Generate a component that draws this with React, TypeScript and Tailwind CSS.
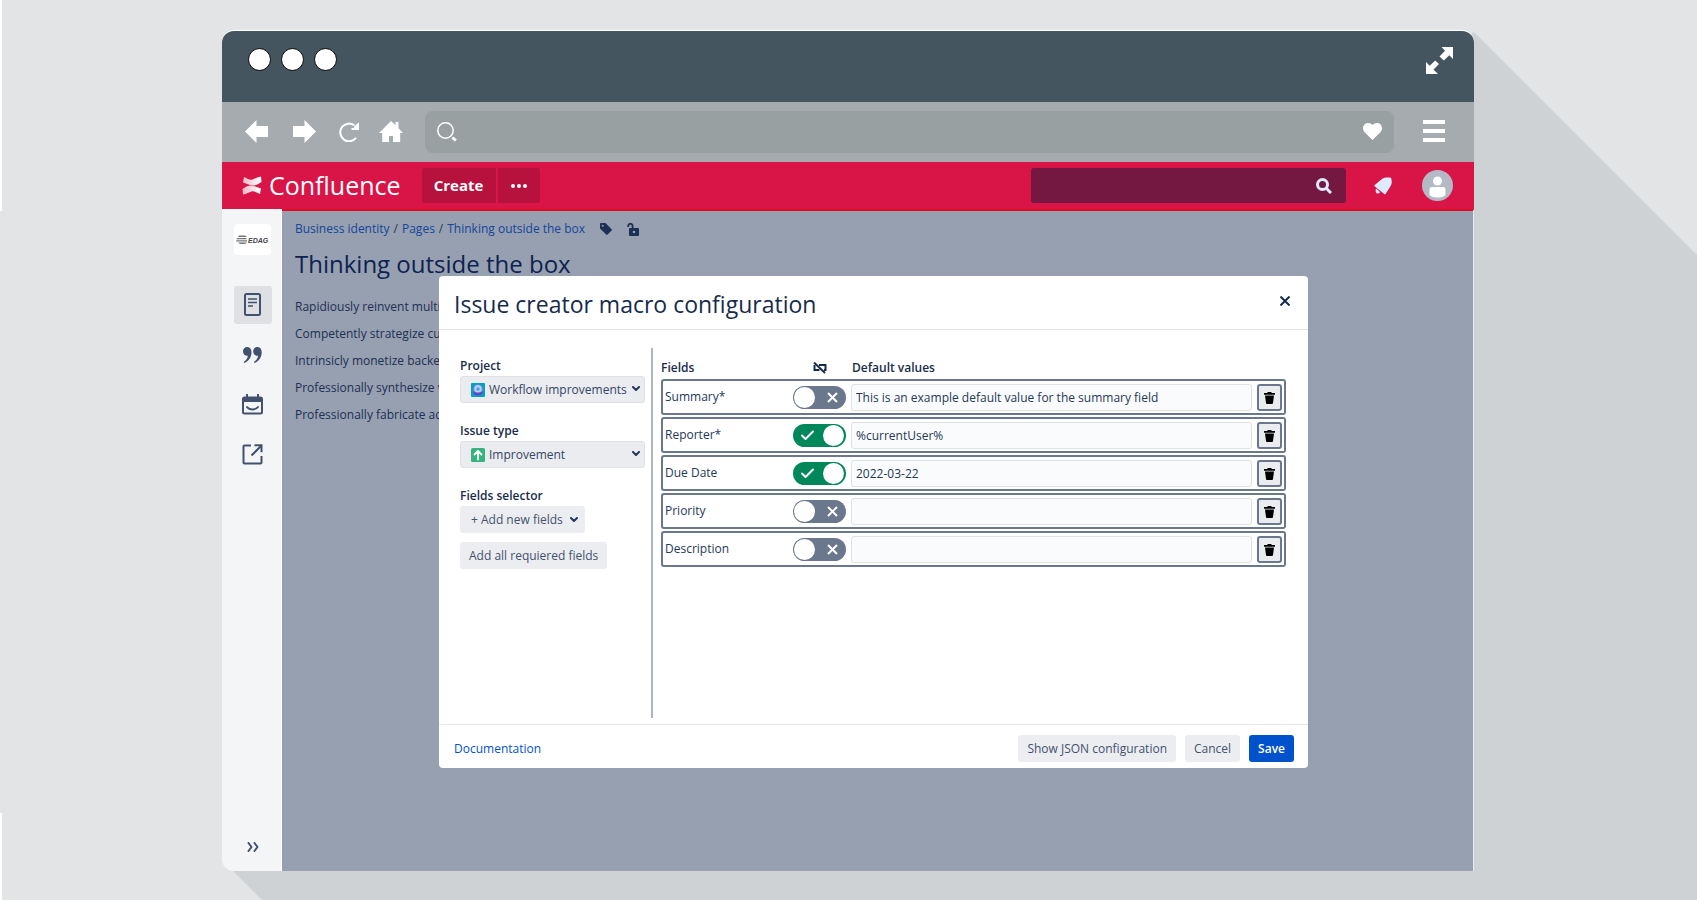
import { useState } from "react";
import type { ReactNode } from "react";

type Field = {
  name: string;
  hidden: boolean;
  value: string;
};

const initialFields: Field[] = [
  { name: "Summary*", hidden: false, value: "This is an example default value for the summary field" },
  { name: "Reporter*", hidden: true, value: "%currentUser%" },
  { name: "Due Date", hidden: true, value: "2022-03-22" },
  { name: "Priority", hidden: false, value: "" },
  { name: "Description", hidden: false, value: "" },
];

const paragraphs = [
  "Rapidiously reinvent multif",
  "Competently strategize cus",
  "Intrinsicly monetize backen",
  "Professionally synthesize w",
  "Professionally fabricate ada",
];

function Chevron({ className }: { className?: string }) {
  return (
    <svg className={className} width="8" height="6" viewBox="0 0 8 6" fill="none" stroke="#253858" strokeWidth="2">
      <path d="M1 1l3 3 3-3" strokeLinecap="round" strokeLinejoin="round" />
    </svg>
  );
}

function TitleBar() {
  return (
    <div className="flex h-[71px] items-start justify-between rounded-t-xl bg-[#45555f] pl-[26px] pr-[21px]">
      <div className="mt-[17px] flex gap-2.5">
        <span className="size-[23px] rounded-full border border-black bg-white" />
        <span className="size-[23px] rounded-full border border-black bg-white" />
        <span className="size-[23px] rounded-full border border-black bg-white" />
      </div>
      <button aria-label="Full screen" className="mt-4">
        <svg width="27" height="27" viewBox="0 0 27 27" fill="#fff">
          <path d="M15.500 0H27v12l-3.700-3.700-5.500 5.200-4.300-4 5.500-5.700z" />
          <path d="M0 27V15l3.700 3.700 5.500-5.200 3.800 3.500-5.500 5.500L12 27z" />
        </svg>
      </button>
    </div>
  );
}

function BrowserToolbar() {
  return (
    <div className="flex h-[60px] items-center bg-[#a5abaf] pb-px pl-[23px] pr-[29px]">
      <button aria-label="Back">
        <svg width="23" height="23" viewBox="0 0 23 23" fill="#fff">
          <path d="M0 11.500L11.500 0v6H23v11H11.500v6z" />
        </svg>
      </button>
      <button aria-label="Forward" className="ml-[25px]">
        <svg width="23" height="23" viewBox="0 0 23 23" fill="#fff">
          <path d="M23 11.500L11.500 0v6H0v11h11.500v6z" />
        </svg>
      </button>
      <button aria-label="Reload" className="ml-[23px]">
        <svg width="20" height="20" viewBox="0 0 20 20">
          <path d="M17 15.800A8.800 8.800 0 1 1 15.500 3.500" fill="none" stroke="#fff" strokeWidth="2" />
          <path d="M20 .3V8h-7.500V6h2.300l1-2.300z" fill="#fff" />
        </svg>
      </button>
      <button aria-label="Home" className="ml-5">
        <svg width="24" height="21" viewBox="0 0 24 21" fill="#fff">
          <path d="M12 0l4.500 4.300V1h3v6.200L24 12h-2.800v9H14v-6h-4v6H3.200v-9H0z" />
        </svg>
      </button>
      <div className="ml-[22px] flex h-[42px] flex-1 items-center rounded-lg bg-[#99a0a2] pl-3 pr-3">
        <svg width="20" height="20" viewBox="0 0 20 20" fill="none" stroke="#fff">
          <circle cx="8.500" cy="8.500" r="7.700" strokeWidth="1.500" />
          <path d="M15.500 15.500l3.300 3" strokeWidth="3" />
        </svg>
        <input aria-label="Address" className="h-full min-w-0 flex-1 px-3 text-[13px] text-white outline-none" />
        <svg width="19" height="17" viewBox="0 0 19 17" fill="#fff">
          <path d="M9.500 17L1.600 9.300C-.6 7-.5 3.500 1.500 1.500c2.300-2.200 6-1.900 8 .6 2-2.500 5.700-2.800 8-.6 2 2 2.100 5.500-.1 7.800z" />
        </svg>
      </div>
      <button aria-label="Menu" className="mb-0.5 ml-[29px] flex flex-col gap-[5px]">
        <span className="h-1 w-[22px] bg-white" />
        <span className="h-1 w-[22px] bg-white" />
        <span className="h-1 w-[22px] bg-white" />
      </button>
    </div>
  );
}

function ConfluenceHeader() {
  return (
    <header className="flex h-[47px] items-center bg-[#d91547] pl-5 pr-[21px]">
      <a href="#" className="flex items-center gap-[7px] pb-px text-white">
        <svg width="20" height="19" viewBox="0 0 20 19">
          <defs>
            <linearGradient id="cf" x1="0" x2="1">
              <stop offset="0" stopColor="#fff" stopOpacity=".7" />
              <stop offset="1" stopColor="#fff" />
            </linearGradient>
          </defs>
          <path d="M2 1c3.500 1.800 6 3.300 8.500 2.500C13 2.800 15.500 1 19 .5L19.500 6c-3 2-6.500 4-10 3.300C6.500 8.700 4 7.500 1 6.500z" fill="url(#cf)" />
          <path d="M18 18c-3.500-1.800-6-3.300-8.500-2.500-2.500.7-5 2.500-8.500 3L.5 13c3-2 6.500-4 10-3.300 3 .6 5.500 1.800 8.500 2.800z" fill="url(#cf)" />
        </svg>
        <span className="text-[25px] leading-8">Confluence</span>
      </a>
      <button className="ml-[21px] h-[35px] w-[74px] rounded-l-[3px] bg-[#b7123d] text-[15px] font-bold text-white">Create</button>
      <button aria-label="More" className="ml-0.5 flex h-[35px] w-[42px] items-center justify-center gap-0.5 rounded-r-[3px] bg-[#b7123d]">
        <span className="size-1 rounded-full bg-white" />
        <span className="size-1 rounded-full bg-white" />
        <span className="size-1 rounded-full bg-white" />
      </button>
      <label className="ml-auto flex h-[35px] w-[315px] items-center rounded-[3px] bg-[#741841] pr-3.5">
        <input aria-label="Search" className="h-full min-w-0 flex-1 px-3 text-[13px] text-white outline-none" />
        <svg width="16" height="16" viewBox="0 0 16 16" fill="none" stroke="#deebff" strokeWidth="3">
          <circle cx="6.500" cy="6.500" r="5" />
          <path d="M10.500 10.500l4.500 4.500" />
        </svg>
      </label>
      <button aria-label="Notifications" className="ml-7">
        <svg width="18" height="18" viewBox="0 0 18 18" fill="#deebff">
          <path d="M8 2C11 0 14 .2 17 .8c1.200 3.500 1 6.500-1 9.200l-4.500 7c-.3.500-.8.500-1.200.1L.6 9.300c-.5-.4-.4-1 .1-1.300z" />
          <path d="M2.200 11.500l4 3.800c-1 1.200-2.800 1.500-3.800.6s-1-3.400-.2-4.400z" />
        </svg>
      </button>
      <button aria-label="Profile" className="ml-[30px]">
        <svg width="31" height="31" viewBox="0 0 31 31">
          <circle cx="15.500" cy="15.500" r="15.500" fill="#b3bac5" />
          <circle cx="15.500" cy="11" r="4.500" fill="#fff" />
          <path d="M7.500 19.500a2.500 2.500 0 0 1 2.500-2.500h11a2.500 2.500 0 0 1 2.500 2.500V24c0 2-3.500 3.500-8 3.500s-8-1.500-8-3.500z" fill="#fff" />
        </svg>
      </button>
    </header>
  );
}

function Sidebar() {
  return (
    <nav className="flex w-[60px] shrink-0 flex-col items-center rounded-bl-xl border-r border-white bg-[#f4f5f7] pb-[19px] pl-0.5 pt-[15px]">
      <a href="#" aria-label="EDAG" className="flex h-[31px] w-[37px] items-center justify-center rounded-sm bg-white">
        <svg width="34" height="10" viewBox="0 0 34 10">
          <path d="M3 .5h6l2 1.500H2zM1 3h9.500v1.300H.5zM0 5.300h11v1.300H.5zM2 7.500h9L9 9H4z" fill="#777" />
          <text x="12" y="7.500" fontFamily="Liberation Sans, sans-serif" fontSize="7" fontWeight="700" fontStyle="italic" fill="#444">EDAG</text>
        </svg>
      </a>
      <button aria-label="Pages" className="mt-[31px] flex size-[38px] items-center justify-center rounded-[3px] bg-[#dfe0e4]">
        <svg width="17" height="24" viewBox="0 0 17 24" fill="none" stroke="#42526e" strokeWidth="2">
          <rect x="1" y="1" width="15" height="21" rx="1.500" strokeWidth="2" />
          <path d="M4 6h9M4 9.500h9M4 13h5" strokeWidth="1.500" />
        </svg>
      </button>
      <button aria-label="Blog" className="mt-[23px]">
        <svg width="19" height="16" viewBox="0 0 19 16" fill="#42526e">
          <path d="M4 0c2.600 0 4.500 1.900 4.500 5.200C8.500 10 6 14 1.200 16l-.5-1c2.700-1.700 4-3.800 4.100-6.200C2 9.300 0 7 0 4.300 0 1.800 1.800 0 4 0z" />
          <path d="M14.200 0c2.600 0 4.500 1.900 4.500 5.200 0 4.800-2.500 8.800-7.300 10.800l-.5-1c2.700-1.700 4-3.800 4.100-6.200-2.800.5-4.800-1.800-4.800-4.500C10.200 1.800 12 0 14.200 0z" />
        </svg>
      </button>
      <button aria-label="Calendar" className="mt-[31px]">
        <svg width="21" height="21" viewBox="0 0 21 21" fill="none" stroke="#42526e" strokeWidth="2">
          <rect x="1" y="3.500" width="19" height="16" rx="1.500" />
          <path d="M1 6h19" strokeWidth="4" />
          <path d="M5 0v5M16 0v5" />
          <path d="M5 13c2.500 3.300 8.500 3.300 11 0" strokeLinecap="round" />
        </svg>
      </button>
      <button aria-label="Shortcuts" className="mt-[29px]">
        <svg width="21" height="21" viewBox="0 0 21 21" fill="none" stroke="#42526e" strokeWidth="2">
          <path d="M9 1.500H2.500a1 1 0 0 0-1 1v16a1 1 0 0 0 1 1h16a1 1 0 0 0 1-1V12" />
          <path d="M9.500 11.500L19 2" />
          <path d="M12.500 1.200h7v7" />
        </svg>
      </button>
      <button aria-label="Expand sidebar" className="mt-auto">
        <svg width="12" height="10" viewBox="0 0 12 10" fill="none" stroke="#42526e" strokeWidth="2" strokeLinecap="round" strokeLinejoin="round">
          <path d="M1.500 1l3 4-3 4M7.500 1l3 4-3 4" />
        </svg>
      </button>
    </nav>
  );
}

function PageContent() {
  return (
    <main className="flex-1 border-t-2 border-[#e00a22] border-r border-r-[#e8eaee] bg-[#97a0b0] pl-[13px] text-[12px] text-[#1d2f54]">
      <div className="mt-2 flex items-center leading-5 text-[#13459a]">
        <a href="#">Business identity</a>
        <span className="mx-1 text-[#253858]">/</span>
        <a href="#">Pages</a>
        <span className="mx-1 text-[#253858]">/</span>
        <a href="#">Thinking outside the box</a>
        <button aria-label="Labels" className="ml-[15px]">
          <svg width="12" height="12" viewBox="0 0 12 12" fill="#1d2f54">
            <path fillRule="evenodd" d="M1 0h4.500l6.100 6.200a1 1 0 0 1 0 1.400l-4 4a1 1 0 0 1-1.400 0L0 5.500V1a1 1 0 0 1 1-1zm1.700 1.700a1 1 0 1 0 0 2 1 1 0 0 0 0-2z" />
          </svg>
        </button>
        <button aria-label="Restrictions" className="ml-[15px]">
          <svg width="12" height="13" viewBox="0 0 12 13">
            <path d="M1.200 4V3a2.200 2.200 0 0 1 4.400 0V6" fill="none" stroke="#1d2f54" strokeWidth="1.800" />
            <path fillRule="evenodd" d="M3 5h8a1 1 0 0 1 1 1V12a1 1 0 0 1-1 1H3a1 1 0 0 1-1-1V6a1 1 0 0 1 1-1zm4 2.700a1.300 1.300 0 1 0 0 2.600 1.300 1.300 0 0 0 0-2.600z" fill="#1d2f54" />
          </svg>
        </button>
      </div>
      <h1 className="mt-[9px] text-[24px] leading-8 text-[#0d2250]">Thinking outside the box</h1>
      <div className="mt-[17px] flex flex-col gap-[7px] leading-5">
        {paragraphs.map((text) => (
          <p key={text}>{text}</p>
        ))}
      </div>
    </main>
  );
}

function SelectField({ id, label, option, icon }: { id: string; label: string; option: string; icon: ReactNode }) {
  return (
    <div className="mb-[18px]">
      <label htmlFor={id} className="block font-semibold leading-5 text-[#172b4d]">
        {label}
      </label>
      <div className="relative">
        <span className="pointer-events-none absolute left-[11px] top-[7px]">{icon}</span>
        <select id={id} className="h-[27px] w-full appearance-none rounded-[3px] border border-[#dfe1e6] bg-[#ebecf0] pl-7 pr-4 text-[#344563]">
          <option>{option}</option>
        </select>
        <Chevron className="pointer-events-none absolute right-[5px] top-2.5" />
      </div>
    </div>
  );
}

function Toggle({ label, checked, onChange }: { label: string; checked: boolean; onChange: () => void }) {
  return (
    <label className="relative block h-[23px] w-[53px] cursor-pointer">
      <input type="checkbox" aria-label={label} checked={checked} onChange={onChange} className="peer absolute inset-0 size-full appearance-none rounded-full bg-[#6b778c] checked:bg-[#00875a]" />
      {checked ? (
        <svg className="absolute left-2 top-1.5" width="13" height="11" viewBox="0 0 13 11" fill="none" stroke="#fff" strokeWidth="2">
          <path d="M1 5.500l3.500 3.500L12 1.500" strokeLinecap="round" strokeLinejoin="round" />
        </svg>
      ) : (
        <svg className="absolute right-2 top-1.5" width="11" height="11" viewBox="0 0 11 11" fill="none" stroke="#fff" strokeWidth="2">
          <path d="M1 1l9 9M10 1l-9 9" />
        </svg>
      )}
      <span className="pointer-events-none absolute left-px top-px size-[21px] rounded-full bg-white peer-checked:left-auto peer-checked:right-0.5" />
    </label>
  );
}

function FieldsTable() {
  const [fields, setFields] = useState(initialFields);

  const update = (index: number, patch: Partial<Field>) => {
    setFields(fields.map((f, i) => (i === index ? { ...f, ...patch } : f)));
  };

  return (
    <table className="w-full border-separate border-spacing-x-0 border-spacing-y-[2px] text-left text-[#253858]">
      <thead className="leading-[19px] text-[#172b4d]">
        <tr>
          <th className="w-[132px] font-semibold">Fields</th>
          <th className="w-[58px]" aria-label="Hidden">
            <svg className="ml-5" width="14" height="12" viewBox="0 0 14 12" fill="none" stroke="#172b4d" strokeWidth="2">
              <path d="M1.500 3v5h5M6 3h6.500v5H11" />
              <path d="M1 .5l11 10.500" />
            </svg>
          </th>
          <th className="pl-px font-semibold">Default values</th>
          <th className="w-[34px]" aria-label="Actions" />
        </tr>
      </thead>
      <tbody>
        {fields.map((field, i) => (
          <tr key={field.name} className="h-9">
            <td className="rounded-l-[3px] border-y-2 border-l-2 border-[#6b778c] pl-0.5">{field.name}</td>
            <td className="border-y-2 border-[#6b778c]">
              <Toggle label={`Hide ${field.name}`} checked={field.hidden} onChange={() => update(i, { hidden: !field.hidden })} />
            </td>
            <td className="border-y-2 border-[#6b778c]">
              <input
                aria-label={`${field.name} default value`}
                value={field.value}
                onChange={(e) => update(i, { value: e.target.value })}
                className="block h-[27px] w-full rounded-[3px] border border-[#dfe1e6] bg-[#fafbfc] px-1"
              />
            </td>
            <td className="rounded-r-[3px] border-y-2 border-r-2 border-[#6b778c] pl-[5px]">
              <button
                aria-label={`Remove ${field.name}`}
                onClick={() => setFields(fields.filter((_, n) => n !== i))}
                className="flex h-[27px] w-[25px] items-center justify-center rounded-[3px] border-2 border-[#6b778c] bg-[#ebecf0] pt-px"
              >
                <svg width="11" height="12" viewBox="0 0 11 12">
                  <path d="M0 1h3.500V0h4v1H11v1.800H0zM1 3.600h9L9 11a1 1 0 0 1-1 1H3a1 1 0 0 1-1-1z" fill="#000" />
                </svg>
              </button>
            </td>
          </tr>
        ))}
      </tbody>
    </table>
  );
}

function MacroDialog() {
  return (
    <section role="dialog" aria-labelledby="dialog-title" className="absolute bottom-[103px] left-[217px] right-[166px] top-[246px] flex flex-col rounded-[4px] bg-white text-[12px] text-[#42526e]">
      <header className="flex h-[54px] shrink-0 items-center justify-between border-b border-[#e4e6ea] pl-[15px] pr-[18px] pt-0.5">
        <h2 id="dialog-title" className="text-[23px] leading-8 text-[#172b4d]">Issue creator macro configuration</h2>
        <button aria-label="Close" className="mt-[18px] self-start">
          <svg width="10" height="10" viewBox="0 0 10 10" stroke="#172b4d" strokeWidth="2">
            <path d="M.5.5l9 9M9.500.5l-9 9" />
          </svg>
        </button>
      </header>

      <div className="flex flex-1 pb-[6px] pt-[18px]">
        <div className="w-[214px] shrink-0 border-r-2 border-[#afb5c0] pl-[21px] pr-[6px] pt-2">
          <SelectField
            id="project"
            label="Project"
            option="Workflow improvements"
            icon={
              <svg width="14" height="14" viewBox="0 0 14 14">
                <rect width="14" height="14" rx="1" fill="#00a3bf" />
                <circle cx="7" cy="6.500" r="5" fill="#8777d9" />
                <circle cx="7" cy="5.800" r="3.800" fill="#b3d4ff" />
                <circle cx="7" cy="6" r="1.800" fill="#4c9aff" />
                <path d="M2 8.500c3 1.800 7 1.800 10 0l-1 2.500c-2 1.800-6 1.800-8 0z" fill="#6b3fc0" />
              </svg>
            }
          />
          <SelectField
            id="issue-type"
            label="Issue type"
            option="Improvement"
            icon={
              <svg width="14" height="14" viewBox="0 0 14 14">
                <rect width="14" height="14" rx="1.500" fill="#36b37e" />
                <path d="M7 11.500V3.500M3.500 6.500L7 3l3.500 3.500" fill="none" stroke="#fff" strokeWidth="1.800" strokeLinecap="round" strokeLinejoin="round" />
              </svg>
            }
          />
          <h3 className="font-semibold leading-5 text-[#172b4d]">Fields selector</h3>
          <button className="flex h-[27px] items-center gap-[7px] rounded-[3px] bg-[#ecedf0] pl-[11px] pr-[7px]">
            + Add new fields
            <Chevron />
          </button>
          <button className="mt-[9px] h-[27px] rounded-[3px] bg-[#ecedf0] px-[9px]">Add all requiered fields</button>
        </div>
        <div className="flex-1 pl-2 pr-[22px] pt-2">
          <FieldsTable />
        </div>
      </div>

      <footer className="flex h-11 shrink-0 items-center border-t border-[#e4e6ea] pl-[15px] pr-3.5 pt-1">
        <a href="#" className="mr-auto text-[#0052cc]">Documentation</a>
        <button className="h-[27px] rounded-[3px] bg-[#ecedf0] px-[9px]">Show JSON configuration</button>
        <button className="ml-[9px] h-[27px] rounded-[3px] bg-[#ecedf0] px-[9px]">Cancel</button>
        <button className="ml-[9px] h-[27px] rounded-[3px] bg-[#0052cc] px-[9px] font-semibold text-white">Save</button>
      </footer>
    </section>
  );
}

export default function App() {
  return (
    <div className="relative flex min-h-screen flex-col bg-[#e3e4e6] pb-[29px] pl-[222px] pr-[223px] pt-[30px] font-['Open_Sans','Noto_Sans',sans-serif]">
      {/* long shadow cast by the browser window */}
      <div className="absolute inset-0 bg-[#ced2d5] [clip-path:polygon(calc(100%-223px)_32px,100%_255px,100%_100%,262px_100%,230px_calc(100%-32px))]" />
      <div className="absolute left-0 top-0 h-[211px] w-0.5 bg-white" />
      <div className="absolute bottom-0 left-0 h-[87px] w-0.5 bg-white" />

      <div className="relative flex flex-1 flex-col">
        <div className="rounded-t-xl border-t border-white">
          <TitleBar />
        </div>
        <BrowserToolbar />
        <ConfluenceHeader />
        <div className="flex flex-1">
          <Sidebar />
          <PageContent />
        </div>
        <MacroDialog />
      </div>
    </div>
  );
}
